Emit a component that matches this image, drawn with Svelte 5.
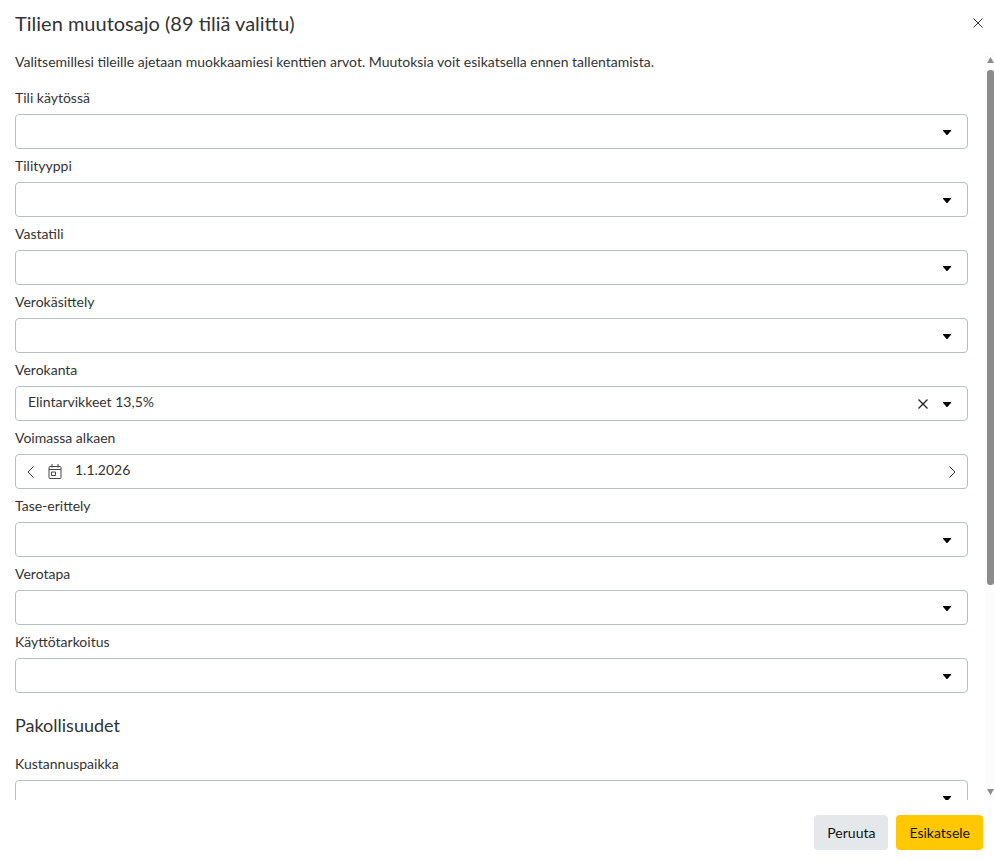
<script>
  const before = ['Tili käytössä', 'Tilityyppi', 'Vastatili', 'Verokäsittely'];
  const after = ['Tase-erittely', 'Verotapa', 'Käyttötarkoitus'];
</script>

{#snippet caret()}
  <svg class="caret" width="8" height="5" viewBox="0 0 8 5" aria-hidden="true">
    <path d="M0 0h8v.8L4.6 4.7a.8.8 0 0 1-1.2 0L0 .8z" fill="#000" />
  </svg>
{/snippet}

{#snippet select(label)}
  <div class="field">
    <label for={label}>{label}</label>
    <div class="input" id={label}>
      <span class="value"></span>
      {@render caret()}
    </div>
  </div>
{/snippet}

<div class="dialog">
  <header>
    <h2>Tilien muutosajo (89 tiliä valittu)</h2>
    <button class="close" aria-label="Sulje">
      <svg width="10" height="10" viewBox="0 0 10 10">
        <path d="M0.5 0.5l9 9M9.5 0.5l-9 9" stroke="#333" stroke-width="1" fill="none" />
      </svg>
    </button>
  </header>

  <div class="body">
    <div class="scroll">
      <p class="intro">Valitsemillesi tileille ajetaan muokkaamiesi kenttien arvot. Muutoksia voit esikatsella ennen tallentamista.</p>

      {#each before as label}
        {@render select(label)}
      {/each}

      <div class="field">
        <label for="verokanta">Verokanta</label>
        <div class="input" id="verokanta">
          <span class="value">Elintarvikkeet 13,5%</span>
          <svg class="clear" width="10" height="10" viewBox="0 0 10 10" aria-hidden="true">
            <path d="M0.5 0.5l9 9M9.5 0.5l-9 9" stroke="#222" stroke-width="1.3" fill="none" />
          </svg>
          {@render caret()}
        </div>
      </div>

      <div class="field">
        <label for="alkaen">Voimassa alkaen</label>
        <div class="input date" id="alkaen">
          <svg width="7" height="12" viewBox="0 0 7 12" aria-hidden="true">
            <path d="M6.5 0.5L1 6l5.5 5.5" stroke="#333" fill="none" />
          </svg>
          <svg class="cal" width="14" height="16" viewBox="0 0 14 16" aria-hidden="true">
            <path d="M1 4.5a1 1 0 0 1 1-1h10a1 1 0 0 1 1 1v10a1 1 0 0 1-1 1H2a1 1 0 0 1-1-1zM1 6.5h12M4 1v3.5M10 1v3.5M3.5 9h4v3.5h-4z" stroke="#444" stroke-width="1" fill="none" />
          </svg>
          <span class="value">1.1.2026</span>
          <svg width="7" height="12" viewBox="0 0 7 12" aria-hidden="true">
            <path d="M0.5 0.5L6 6l-5.5 5.5" stroke="#333" fill="none" />
          </svg>
        </div>
      </div>

      {#each after as label}
        {@render select(label)}
      {/each}

      <h3>Pakollisuudet</h3>

      {@render select('Kustannuspaikka')}
    </div>

    <div class="scrollbar">
      <svg class="arrow" width="7" height="6" viewBox="0 0 7 6"><path d="M3.5 0l3.5 6H0z" fill="#8c8c8c" /></svg>
      <div class="track"><div class="thumb"></div></div>
      <svg class="arrow" width="7" height="6" viewBox="0 0 7 6"><path d="M0 0h7L3.5 6z" fill="#8c8c8c" /></svg>
    </div>
  </div>

  <footer>
    <button class="btn cancel">Peruuta</button>
    <button class="btn primary">Esikatsele</button>
  </footer>
</div>

<style>
  :global(body) {
    margin: 0;
    background: #fff;
  }

  .dialog {
    width: 994px;
    height: 862px;
    display: flex;
    flex-direction: column;
    font-family: Lato, "Liberation Sans", sans-serif;
    color: #333;
    overflow: hidden;
  }

  header {
    height: 46px;
    padding: 0 11px 2px 15px;
    display: flex;
    align-items: center;
    justify-content: space-between;
    flex: none;
  }

  h2 {
    margin: 0;
    font-size: 20px;
    font-weight: 400;
    color: #333;
  }

  .close {
    border: 0;
    background: none;
    padding: 0;
    width: 10px;
    height: 10px;
    display: flex;
  }

  .body {
    height: 752px;
    flex: none;
    display: flex;
    overflow: hidden;
  }

  .scroll {
    width: 953px;
    padding: 0 0 0 15px;
    flex: none;
  }

  .intro {
    margin: 4px 0 0;
    font-size: 14px;
    line-height: 20px;
    height: 29px;
  }

  .field {
    height: 68px;
  }

  label {
    display: block;
    padding-top: 7px;
    font-size: 14px;
    line-height: 20px;
    height: 26px;
    box-sizing: border-box;
    margin-bottom: 7px;
  }

  .input {
    height: 35px;
    box-sizing: border-box;
    border: 1px solid #b5bfc4;
    border-radius: 4px;
    display: flex;
    align-items: center;
    padding: 0 16px 0 12px;
    font-size: 14px;
    background: #fff;
  }

  .value {
    flex: 1;
    position: relative;
    top: -2px;
  }

  .caret {
    margin-top: 2px;
  }

  .clear {
    margin-right: 15px;
  }

  .date {
    padding: 0 11px;
  }

  .cal {
    margin: 0 0 2px 14px;
  }

  .date .value {
    margin-left: 13px;
  }

  h3 {
    margin: 0;
    padding-top: 20px;
    height: 34px;
    font-size: 18px;
    line-height: 24px;
    font-weight: 400;
  }

  .scrollbar {
    margin: 4px 0 0 17px;
    width: 9px;
    padding: 5px 0 5px;
    box-sizing: border-box;
    background: #fcfcfc;
    display: flex;
    flex-direction: column;
    align-items: flex-end;
    gap: 7px;
  }

  .arrow {
    flex: none;
  }

  .track {
    flex: 1;
    width: 7px;
  }

  .thumb {
    height: 515px;
    width: 7px;
    background: #8c8c8c;
    border-radius: 3px;
  }

  footer {
    flex: none;
    display: flex;
    justify-content: flex-end;
    gap: 8px;
    padding: 15px 11px 0 0;
  }

  .btn {
    height: 35px;
    border: 0;
    border-radius: 4px;
    padding: 0 13px;
    font-family: inherit;
    font-size: 14px;
    color: #111;
  }

  .cancel {
    background: #e5e8ea;
  }

  .primary {
    background: #ffc800;
  }
</style>
